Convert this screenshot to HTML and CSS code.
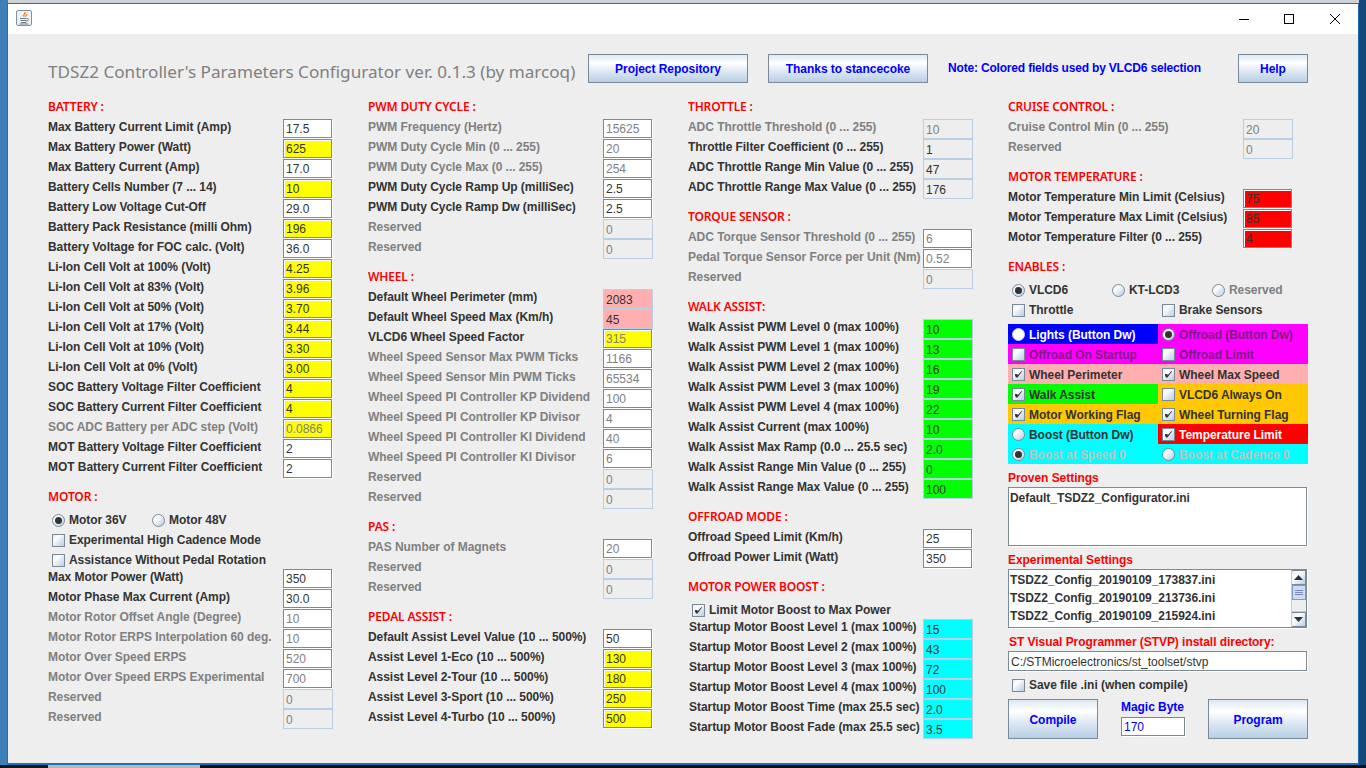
FILE: index.html
```html
<!DOCTYPE html>
<html lang="en">
<head>
<meta charset="utf-8">
<title>TSDZ2 Parameters Configurator</title>
<link rel="stylesheet" href="styles.css">
</head>
<body>
<svg class="defs" width="0" height="0" aria-hidden="true"><symbol id="chk" viewBox="0 0 13 13"><path d="M3 6h2.500v1.500L9.500 3 10 3.500 5.500 9.500H4L3 7.500z" fill="#333"/></symbol></svg>
<div class="topstrip"></div>
<div class="window">
  <div class="titlebar">
    <svg class="appicon" width="16" height="16" viewBox="0 0 16 16"><rect x=".5" y=".5" width="15" height="15" rx="1.500" fill="#eef1f4" stroke="#7f90a0"/><path d="M9 2C10.500 3.500 7.500 4.500 8 6.500 6 5.500 9 4 9 2zM10.800 4c.6 1.500-1.500 1.700-1 3C8.500 6 10.500 5.300 10.800 4z" fill="#f47a00" stroke="#f08000" stroke-width=".7"/><path d="M4 8.500h6.500M4.500 10.500h6M5 12.500h5.500M3.500 14h9M11 8.500c2 0 2 2.500-.5 2.500" fill="none" stroke="#6c7c8c"/></svg>
    <div class="controls">
      <svg class="ctl" width="12" height="12" viewBox="0 0 12 12"><path d="M2 6.500h10" stroke="#000"/></svg>
      <svg class="ctl" width="12" height="12" viewBox="0 0 12 12"><rect x="1.500" y="1.500" width="9" height="9" fill="none" stroke="#000"/></svg>
      <svg class="ctl" width="12" height="12" viewBox="0 0 12 12"><path d="M1 1l10 10M11 1L1 11" stroke="#000"/></svg>
    </div>
  </div>
  <div class="content">
    <div class="head">
      <div class="apptitle">TDSZ2 Controller's Parameters Configurator ver. 0.1.3 (by marcoq)</div>
      <div class="btn wide">Project Repository</div>
      <div class="btn wide">Thanks to stancecoke</div>
      <div class="note">Note: Colored fields used by VLCD6 selection</div>
      <div class="btn help">Help</div>
    </div>
    <div class="cols">
      <div class="col">
        <div class="sec first">BATTERY :</div>
        <div class="row"><span>Max Battery Current Limit (Amp)</span><div class="f">17.5</div></div>
        <div class="row"><span>Max Battery Power (Watt)</span><div class="f y">625</div></div>
        <div class="row"><span>Max Battery Current (Amp)</span><div class="f">17.0</div></div>
        <div class="row"><span>Battery Cells Number (7 ... 14)</span><div class="f y">10</div></div>
        <div class="row"><span>Battery Low Voltage Cut-Off</span><div class="f">29.0</div></div>
        <div class="row"><span>Battery Pack Resistance (milli Ohm)</span><div class="f y">196</div></div>
        <div class="row"><span>Battery Voltage for FOC calc. (Volt)</span><div class="f">36.0</div></div>
        <div class="row"><span>Li-Ion Cell Volt at 100% (Volt)</span><div class="f y">4.25</div></div>
        <div class="row"><span>Li-Ion Cell Volt at 83% (Volt)</span><div class="f y">3.96</div></div>
        <div class="row"><span>Li-Ion Cell Volt at 50% (Volt)</span><div class="f y">3.70</div></div>
        <div class="row"><span>Li-Ion Cell Volt at 17% (Volt)</span><div class="f y">3.44</div></div>
        <div class="row"><span>Li-Ion Cell Volt at 10% (Volt)</span><div class="f y">3.30</div></div>
        <div class="row"><span>Li-Ion Cell Volt at 0% (Volt)</span><div class="f y">3.00</div></div>
        <div class="row"><span>SOC Battery Voltage Filter Coefficient</span><div class="f y">4</div></div>
        <div class="row"><span>SOC Battery Current Filter Coefficient</span><div class="f y">4</div></div>
        <div class="row dim"><span>SOC ADC Battery per ADC step (Volt)</span><div class="f y">0.0866</div></div>
        <div class="row"><span>MOT Battery Voltage Filter Coefficient</span><div class="f">2</div></div>
        <div class="row"><span>MOT Battery Current Filter Coefficient</span><div class="f">2</div></div>

        <div class="sec">MOTOR :</div>
        <div class="opts">
          <div class="optrow">
            <div class="opt w100"><i class="radio on"></i>Motor 36V</div>
            <div class="opt w100"><i class="radio"></i>Motor 48V</div>
          </div>
          <div class="optrow"><div class="opt"><i class="box"></i>Experimental High Cadence Mode</div></div>
          <div class="optrow"><div class="opt"><i class="box"></i>Assistance Without Pedal Rotation</div></div>
        </div>
        <div class="row"><span>Max Motor Power (Watt)</span><div class="f">350</div></div>
        <div class="row"><span>Motor Phase Max Current (Amp)</span><div class="f">30.0</div></div>
        <div class="row dim"><span>Motor Rotor Offset Angle (Degree)</span><div class="f">10</div></div>
        <div class="row dim"><span>Motor Rotor ERPS Interpolation 60 deg.</span><div class="f">10</div></div>
        <div class="row dim"><span>Motor Over Speed ERPS</span><div class="f">520</div></div>
        <div class="row dim"><span>Motor Over Speed ERPS Experimental</span><div class="f">700</div></div>
        <div class="row dim"><span>Reserved</span><div class="f d">0</div></div>
        <div class="row dim"><span>Reserved</span><div class="f d">0</div></div>
      </div>

      <div class="col">
        <div class="sec first">PWM DUTY CYCLE :</div>
        <div class="row dim"><span>PWM Frequency (Hertz)</span><div class="f">15625</div></div>
        <div class="row dim"><span>PWM Duty Cycle Min (0 ... 255)</span><div class="f">20</div></div>
        <div class="row dim"><span>PWM Duty Cycle Max (0 ... 255)</span><div class="f">254</div></div>
        <div class="row"><span>PWM Duty Cycle Ramp Up (milliSec)</span><div class="f">2.5</div></div>
        <div class="row"><span>PWM Duty Cycle Ramp Dw (milliSec)</span><div class="f">2.5</div></div>
        <div class="row dim"><span>Reserved</span><div class="f d">0</div></div>
        <div class="row dim"><span>Reserved</span><div class="f d">0</div></div>

        <div class="sec">WHEEL :</div>
        <div class="row"><span>Default Wheel Perimeter (mm)</span><div class="f d p">2083</div></div>
        <div class="row"><span>Default Wheel Speed Max (Km/h)</span><div class="f d p">45</div></div>
        <div class="row"><span>VLCD6 Wheel Speed Factor</span><div class="f y faint">315</div></div>
        <div class="row dim"><span>Wheel Speed Sensor Max PWM Ticks</span><div class="f">1166</div></div>
        <div class="row dim"><span>Wheel Speed Sensor Min PWM Ticks</span><div class="f">65534</div></div>
        <div class="row dim"><span>Wheel Speed PI Controller KP Dividend</span><div class="f">100</div></div>
        <div class="row dim"><span>Wheel Speed PI Controller KP Divisor</span><div class="f">4</div></div>
        <div class="row dim"><span>Wheel Speed PI Controller KI Dividend</span><div class="f">40</div></div>
        <div class="row dim"><span>Wheel Speed PI Controller KI Divisor</span><div class="f">6</div></div>
        <div class="row dim"><span>Reserved</span><div class="f d">0</div></div>
        <div class="row dim"><span>Reserved</span><div class="f d">0</div></div>

        <div class="sec">PAS :</div>
        <div class="row dim"><span>PAS Number of Magnets</span><div class="f">20</div></div>
        <div class="row dim"><span>Reserved</span><div class="f d">0</div></div>
        <div class="row dim"><span>Reserved</span><div class="f d">0</div></div>

        <div class="sec">PEDAL ASSIST :</div>
        <div class="row"><span>Default Assist Level Value (10 ... 500%)</span><div class="f">50</div></div>
        <div class="row"><span>Assist Level 1-Eco (10 ... 500%)</span><div class="f y">130</div></div>
        <div class="row"><span>Assist Level 2-Tour (10 ... 500%)</span><div class="f y">180</div></div>
        <div class="row"><span>Assist Level 3-Sport (10 ... 500%)</span><div class="f y">250</div></div>
        <div class="row"><span>Assist Level 4-Turbo (10 ... 500%)</span><div class="f y">500</div></div>
      </div>

      <div class="col">
        <div class="sec first">THROTTLE :</div>
        <div class="row dim"><span>ADC Throttle Threshold (0 ... 255)</span><div class="f d">10</div></div>
        <div class="row"><span>Throttle Filter Coefficient (0 ... 255)</span><div class="f d live">1</div></div>
        <div class="row"><span>ADC Throttle Range Min Value (0 ... 255)</span><div class="f d live">47</div></div>
        <div class="row"><span>ADC Throttle Range Max Value (0 ... 255)</span><div class="f d live">176</div></div>

        <div class="sec">TORQUE SENSOR :</div>
        <div class="row dim"><span>ADC Torque Sensor Threshold (0 ... 255)</span><div class="f">6</div></div>
        <div class="row dim"><span>Pedal Torque Sensor Force per Unit (Nm)</span><div class="f">0.52</div></div>
        <div class="row dim"><span>Reserved</span><div class="f d">0</div></div>

        <div class="sec">WALK ASSIST:</div>
        <div class="row"><span>Walk Assist PWM Level 0 (max 100%)</span><div class="f d g">10</div></div>
        <div class="row"><span>Walk Assist PWM Level 1 (max 100%)</span><div class="f d g">13</div></div>
        <div class="row"><span>Walk Assist PWM Level 2 (max 100%)</span><div class="f d g">16</div></div>
        <div class="row"><span>Walk Assist PWM Level 3 (max 100%)</span><div class="f d g">19</div></div>
        <div class="row"><span>Walk Assist PWM Level 4 (max 100%)</span><div class="f d g">22</div></div>
        <div class="row"><span>Walk Assist Current (max 100%)</span><div class="f d g">10</div></div>
        <div class="row"><span>Walk Assist Max Ramp (0.0 ... 25.5 sec)</span><div class="f d g">2.0</div></div>
        <div class="row"><span>Walk Assist Range Min Value (0 ... 255)</span><div class="f d g">0</div></div>
        <div class="row"><span>Walk Assist Range Max Value (0 ... 255)</span><div class="f d g">100</div></div>

        <div class="sec">OFFROAD MODE :</div>
        <div class="row"><span>Offroad Speed Limit (Km/h)</span><div class="f">25</div></div>
        <div class="row"><span>Offroad Power Limit (Watt)</span><div class="f">350</div></div>

        <div class="sec">MOTOR POWER BOOST :</div>
        <div class="opts">
          <div class="optrow"><div class="opt"><i class="box"><svg width="13" height="13"><use href="#chk"/></svg></i>Limit Motor Boost to Max Power</div></div>
        </div>
        <div class="row nudge"><span>Startup Motor Boost Level 1 (max 100%)</span><div class="f d c">15</div></div>
        <div class="row nudge"><span>Startup Motor Boost Level 2 (max 100%)</span><div class="f d c">43</div></div>
        <div class="row nudge"><span>Startup Motor Boost Level 3 (max 100%)</span><div class="f d c">72</div></div>
        <div class="row nudge"><span>Startup Motor Boost Level 4 (max 100%)</span><div class="f d c">100</div></div>
        <div class="row nudge"><span>Startup Motor Boost Time (max 25.5 sec)</span><div class="f d c">2.0</div></div>
        <div class="row nudge"><span>Startup Motor Boost Fade (max 25.5 sec)</span><div class="f d c">3.5</div></div>
      </div>

      <div class="col">
        <div class="sec first">CRUISE CONTROL :</div>
        <div class="row dim"><span>Cruise Control Min (0 ... 255)</span><div class="f d">20</div></div>
        <div class="row dim"><span>Reserved</span><div class="f d">0</div></div>

        <div class="sec">MOTOR TEMPERATURE :</div>
        <div class="row"><span>Motor Temperature Min Limit (Celsius)</span><div class="f r">75</div></div>
        <div class="row"><span>Motor Temperature Max Limit (Celsius)</span><div class="f r">85</div></div>
        <div class="row"><span>Motor Temperature Filter (0 ... 255)</span><div class="f r">4</div></div>

        <div class="sec">ENABLES :</div>
        <div class="opts plain">
          <div class="optrow">
            <div class="opt w100"><i class="radio on"></i>VLCD6</div>
            <div class="opt w100"><i class="radio"></i>KT-LCD3</div>
            <div class="opt w100 grey"><i class="radio"></i>Reserved</div>
          </div>
          <div class="optrow">
            <div class="opt w150"><i class="box"></i>Throttle</div>
            <div class="opt w150"><i class="box"></i>Brake Sensors</div>
          </div>
        </div>
        <div class="flags">
          <div class="opt bg-blue white"><i class="radio flat"></i>Lights (Button Dw)</div>
          <div class="opt bg-mag plum"><i class="radio on"></i>Offroad (Button Dw)</div>
          <div class="opt bg-mag plum"><i class="box"></i>Offroad On Startup</div>
          <div class="opt bg-mag plum"><i class="box"></i>Offroad Limit</div>
          <div class="opt bg-pink"><i class="box"><svg width="13" height="13"><use href="#chk"/></svg></i>Wheel Perimeter</div>
          <div class="opt bg-pink"><i class="box"><svg width="13" height="13"><use href="#chk"/></svg></i>Wheel Max Speed</div>
          <div class="opt bg-green"><i class="box"><svg width="13" height="13"><use href="#chk"/></svg></i>Walk Assist</div>
          <div class="opt bg-orange"><i class="box"></i>VLCD6 Always On</div>
          <div class="opt bg-orange"><i class="box"><svg width="13" height="13"><use href="#chk"/></svg></i>Motor Working Flag</div>
          <div class="opt bg-orange"><i class="box"><svg width="13" height="13"><use href="#chk"/></svg></i>Wheel Turning Flag</div>
          <div class="opt bg-cyan"><i class="radio"></i>Boost (Button Dw)</div>
          <div class="opt bg-red white"><i class="box"><svg width="13" height="13"><use href="#chk"/></svg></i>Temperature Limit</div>
          <div class="opt bg-cyan silver"><i class="radio on"></i>Boost at Speed 0</div>
          <div class="opt bg-cyan silver"><i class="radio"></i>Boost at Cadence 0</div>
        </div>

        <div class="cap">Proven Settings</div>
        <div class="list"><div class="item">Default_TSDZ2_Configurator.ini</div></div>
        <div class="cap">Experimental Settings</div>
        <div class="list scroll">
          <div class="items">
            <div class="item">TSDZ2_Config_20190109_173837.ini</div>
            <div class="item">TSDZ2_Config_20190109_213736.ini</div>
            <div class="item">TSDZ2_Config_20190109_215924.ini</div>
          </div>
          <div class="sbar">
            <div class="arrow"><svg width="9" height="5" viewBox="0 0 9 5"><path d="M4.500 0L9 5H0z" fill="#333"/></svg></div>
            <div class="thumb"><b></b><b></b><b></b></div>
            <div class="track"></div>
            <div class="arrow"><svg width="9" height="5" viewBox="0 0 9 5"><path d="M0 0h9L4.500 5z" fill="#333"/></svg></div>
          </div>
        </div>
        <div class="cap stvp">ST Visual Programmer (STVP) install directory:</div>
        <div class="path">C:/STMicroelectronics/st_toolset/stvp</div>
        <div class="opt save"><i class="box"></i>Save file .ini (when compile)</div>
        <div class="actions">
          <div class="btn compile">Compile</div>
          <div class="magic">
            <div class="magiclabel">Magic Byte</div>
            <div class="f magicval">170</div>
          </div>
          <div class="btn program">Program</div>
        </div>
      </div>
    </div>
  </div>
</div>
<div class="bottomstrip"></div>
</body>
</html>
```
FILE: styles.css
```css
* { box-sizing: border-box; }
html, body { margin: 0; padding: 0; }
body {
  width: 1366px;
  height: 768px;
  overflow: hidden;
  padding-left: 7px;
  background: linear-gradient(to right, #3f7fb8 0, #3f7fb8 8px, #0e4a80 1358px, #16486e 100%);
  font: bold 12px/20px "Liberation Sans", Arial, sans-serif;
  letter-spacing: -0.05px;
  color: #333;
}
.defs { position: absolute; }
.topstrip { height: 3px; width: 1351px; margin-left: 1px; background: #cdd3d8; }
.window {
  width: 1352px;
  height: 762px;
  border: 1px solid #1e6fb8;
  border-bottom-width: 2px;
  display: flex;
  flex-direction: column;
}
.titlebar {
  height: 30px;
  flex: none;
  background: #fff;
  display: flex;
  align-items: flex-start;
  padding: 6px 0 0 8px;
}
.appicon { display: block; }
.controls { margin-left: auto; display: flex; gap: 34px; padding: 3px 17px 0 0; }
.ctl { display: block; }
.content { flex: 1; background: #eee; padding: 20px 0 0 40px; }
.head { width: 1260px; display: flex; align-items: flex-start; gap: 20px; }
.apptitle {
  width: 520px;
  margin-top: 8px;
  white-space: nowrap;
  font: 17.13px/20px "Noto Sans", sans-serif;
  letter-spacing: 0;
  color: #808080;
}
.btn {
  height: 29px;
  line-height: 29px;
  text-align: center;
  color: #00f;
  border: 1px solid #7a8a99;
  background: linear-gradient(#dde8f3 0, #fff 30%, #dde8f3 60%, #b8cfe5 100%);
}
.wide { width: 160px; }
.help { width: 70px; }
.note { flex: 1; color: #00f; line-height: 29px; letter-spacing: -0.18px; }
.cols { display: grid; grid-template-columns: repeat(4, 320px); margin-top: 14px; }
.col { width: 285px; }
.sec { height: 20px; color: #f00; margin-top: 10px; font: 600 12px/20px "Noto Sans", sans-serif; letter-spacing: -0.15px; }
.sec.first { margin-top: 0; }
.row { height: 20px; display: flex; justify-content: space-between; align-items: flex-start; white-space: nowrap; }
.row.nudge > span { margin-left: 1px; }
.row.dim { color: #808080; }
.f {
  flex: none;
  width: 49px;
  height: 19px;
  margin: 2px 1px 0 0;
  padding-left: 2px;
  border: 1px solid #7a8a99;
  box-shadow: 1px 1px 0 #fff, inset 1px 1px 0 #fff;
  background: #fff;
  color: #333;
  font-weight: normal;
  letter-spacing: 0;
  line-height: 19px;
}
.row.dim .f, .f.faint { color: #808080; }
.f.d {
  width: 50px;
  height: 20px;
  margin-right: 0;
  border-color: #b8cfe5;
  box-shadow: none;
  background: #eee;
  color: #808080;
  line-height: 20px;
}
.f.d.live { color: #333; }
.f.y { background: #ff0; }
.f.r { background: #f00; }
.f.d.p { background: #ffafaf; color: #333; }
.f.d.g { background: #0f0; color: #333; }
.f.d.c { background: #0ff; color: #333; }
.opts { padding-top: 3px; margin-bottom: -3px; }
.opts.plain { margin-bottom: 0; }
.optrow { display: flex; height: 20px; }
.opt { display: flex; align-items: center; height: 20px; padding-left: 4px; white-space: nowrap; }
.w100 { flex: none; width: 100px; }
.w150 { flex: none; width: 150px; }
.grey { color: #808080; }
.plum { color: #7f1a86; }
.white { color: #fff; }
.silver { color: #c0c0c0; }
.box, .radio {
  flex: none;
  display: block;
  width: 13px;
  height: 13px;
  margin-right: 4px;
  border: 1px solid #7a8a99;
  background: linear-gradient(135deg, #dde8f3 0, #fff 30%, #dde8f3 60%, #b8cfe5 100%);
  position: relative;
}
.box svg { position: absolute; left: -1px; top: -1px; display: block; }
.radio { border-radius: 50%; }
.radio.flat { background: #fff; border-color: #c8d4f0; }
.radio.on::after {
  content: "";
  position: absolute;
  left: 2px;
  top: 2px;
  width: 7px;
  height: 7px;
  border-radius: 50%;
  background: #333;
}
.flags { display: grid; grid-template-columns: 150px 150px; width: 300px; margin-top: 4px; }
.flags .opt { padding-top: 1px; }
.bg-blue { background: #00f; }
.bg-mag { background: #f0f; }
.bg-pink { background: #ffafaf; }
.bg-green { background: #0f0; }
.bg-orange { background: #ffc800; }
.bg-cyan { background: #0ff; }
.bg-red { background: #f00; }
.cap { height: 19px; width: 300px; margin-top: 4px; color: #f00; line-height: 21px; white-space: nowrap; }
.stvp { padding-left: 1px; }
.list {
  width: 299px;
  height: 59px;
  border: 1px solid #7a8a99;
  box-shadow: inset 1px 1px 0 #fff, 1px 1px 0 #fff;
  background: #fff;
  padding: 1px 0 0 1px;
}
.list.scroll { display: flex; padding: 0; }
.item { height: 18px; line-height: 18px; }
.items { flex: 1; padding-top: 1px; padding-left: 1px; }
.sbar { width: 15px; flex: none; display: flex; flex-direction: column; border-left: 1px solid #b8cfe5; background: #eee; }
.arrow {
  height: 15px;
  flex: none;
  display: flex;
  align-items: center;
  justify-content: center;
  background: linear-gradient(135deg, #dde8f3 0, #fff 35%, #dde8f3 65%, #b8cfe5 100%);
  border: 1px solid #7a8a99;
  border-left: 0;
}
.thumb {
  height: 15px;
  flex: none;
  display: flex;
  flex-direction: column;
  justify-content: center;
  gap: 1px;
  padding: 0 2px;
  background: #c8ddf2;
  border: 1px solid #7a9ac8;
}
.thumb b { display: block; height: 1px; background: #7a8ac0; }
.track { flex: 1; border-bottom: 1px solid #b8cfe5; }
.path {
  width: 299px;
  height: 20px;
  border: 1px solid #7a8a99;
  box-shadow: inset 1px 1px 0 #fff, 1px 1px 0 #fff;
  background: #fff;
  padding-left: 2px;
  font-weight: normal;
  letter-spacing: 0;
  line-height: 20px;
}
.save { margin-top: 4px; width: 300px; }
.actions { display: flex; width: 300px; margin-top: 4px; }
.compile { width: 90px; height: 40px; line-height: 40px; }
.program { width: 100px; height: 40px; line-height: 40px; margin-left: auto; }
.magic { width: 64px; margin-left: 23px; }
.magiclabel { height: 16px; line-height: 16px; color: #00f; white-space: nowrap; }
.magicval { width: 64px; margin-top: 2px; color: #00f; }
.bottomstrip { height: 3px; width: 1366px; margin-left: -7px; background: linear-gradient(to right, #10181e 48px, #b8b8b8 48px, #b8b8b8 200px, #0c1014 200px); }
```
